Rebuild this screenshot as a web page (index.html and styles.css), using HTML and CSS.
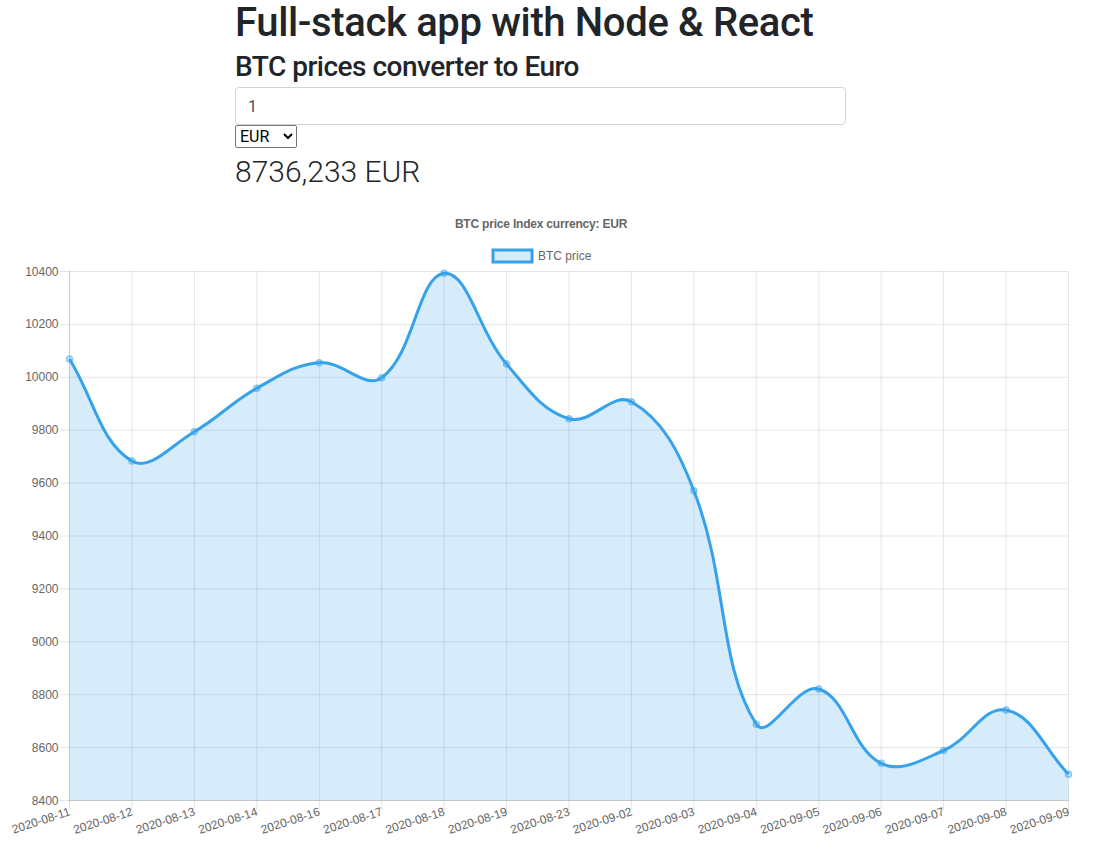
FILE: index.html
```html
<!DOCTYPE html>
<html lang="en">
<head>
<meta charset="utf-8">
<title>Full-stack app with Node &amp; React</title>
<link rel="stylesheet" href="styles.css">
</head>
<body>
<div class="app">
  <h1 class="title">Full-stack app with Node &amp; React</h1>
  <h3 class="subtitle">BTC prices converter to Euro</h3>
  <input class="amount" type="text" value="1">
  <select class="currency">
    <option>EUR</option>
    <option>USD</option>
    <option>GBP</option>
  </select>
  <p class="result">8736,233 EUR</p>
</div>
<div class="chart">
  <svg class="chart-svg" width="1111" height="660" viewBox="0 0 1111 660" xmlns="http://www.w3.org/2000/svg">
    <text class="chart-title" x="541" y="27.5" text-anchor="middle">BTC price Index currency: EUR</text>
    <rect class="legend-box" x="493" y="50" width="39" height="12"></rect>
    <text class="legend-text" x="538" y="59.5">BTC price</text>

    <g class="grid">
      <line x1="60" y1="71.5" x2="1068" y2="71.5"></line>
      <line x1="60" y1="124.4" x2="1068" y2="124.4"></line>
      <line x1="60" y1="177.3" x2="1068" y2="177.3"></line>
      <line x1="60" y1="230.2" x2="1068" y2="230.2"></line>
      <line x1="60" y1="283.1" x2="1068" y2="283.1"></line>
      <line x1="60" y1="336" x2="1068" y2="336"></line>
      <line x1="60" y1="388.9" x2="1068" y2="388.9"></line>
      <line x1="60" y1="441.8" x2="1068" y2="441.8"></line>
      <line x1="60" y1="494.7" x2="1068" y2="494.7"></line>
      <line x1="60" y1="547.6" x2="1068" y2="547.6"></line>
      <line x1="60" y1="600.5" x2="1068" y2="600.5"></line>

      <line x1="69.5" y1="71" x2="69.5" y2="610"></line>
      <line x1="131.9" y1="71" x2="131.9" y2="610"></line>
      <line x1="194.4" y1="71" x2="194.4" y2="610"></line>
      <line x1="256.8" y1="71" x2="256.8" y2="610"></line>
      <line x1="319.3" y1="71" x2="319.3" y2="610"></line>
      <line x1="381.7" y1="71" x2="381.7" y2="610"></line>
      <line x1="444.1" y1="71" x2="444.1" y2="610"></line>
      <line x1="506.6" y1="71" x2="506.6" y2="610"></line>
      <line x1="569" y1="71" x2="569" y2="610"></line>
      <line x1="631.4" y1="71" x2="631.4" y2="610"></line>
      <line x1="693.9" y1="71" x2="693.9" y2="610"></line>
      <line x1="756.3" y1="71" x2="756.3" y2="610"></line>
      <line x1="818.8" y1="71" x2="818.8" y2="610"></line>
      <line x1="881.2" y1="71" x2="881.2" y2="610"></line>
      <line x1="943.6" y1="71" x2="943.6" y2="610"></line>
      <line x1="1006.1" y1="71" x2="1006.1" y2="610"></line>
      <line x1="1068.5" y1="71" x2="1068.5" y2="610"></line>

      <line x1="69.5" y1="71" x2="69.5" y2="601"></line>
      <line x1="69" y1="600.5" x2="1069" y2="600.5"></line>
    </g>

    <g class="y-labels">
      <text x="58.5" y="75.5">10400</text>
      <text x="58.5" y="128.4">10200</text>
      <text x="58.5" y="181.3">10000</text>
      <text x="58.5" y="234.2">9800</text>
      <text x="58.5" y="287.1">9600</text>
      <text x="58.5" y="340">9400</text>
      <text x="58.5" y="392.9">9200</text>
      <text x="58.5" y="445.8">9000</text>
      <text x="58.5" y="498.7">8800</text>
      <text x="58.5" y="551.6">8600</text>
      <text x="58.5" y="604.5">8400</text>
    </g>

    <path id="area" class="area" d=""></path>
    <path id="line" class="line" d=""></path>
    <g id="points" class="points"></g>

    <g class="x-labels">
      <text transform="translate(70,612) rotate(-18)">2020-08-11</text>
      <text transform="translate(132.4,612) rotate(-18)">2020-08-12</text>
      <text transform="translate(194.9,612) rotate(-18)">2020-08-13</text>
      <text transform="translate(257.3,612) rotate(-18)">2020-08-14</text>
      <text transform="translate(319.8,612) rotate(-18)">2020-08-16</text>
      <text transform="translate(382.2,612) rotate(-18)">2020-08-17</text>
      <text transform="translate(444.6,612) rotate(-18)">2020-08-18</text>
      <text transform="translate(507.1,612) rotate(-18)">2020-08-19</text>
      <text transform="translate(569.5,612) rotate(-18)">2020-08-23</text>
      <text transform="translate(631.9,612) rotate(-18)">2020-09-02</text>
      <text transform="translate(694.4,612) rotate(-18)">2020-09-03</text>
      <text transform="translate(756.8,612) rotate(-18)">2020-09-04</text>
      <text transform="translate(819.3,612) rotate(-18)">2020-09-05</text>
      <text transform="translate(881.7,612) rotate(-18)">2020-09-06</text>
      <text transform="translate(944.1,612) rotate(-18)">2020-09-07</text>
      <text transform="translate(1006.6,612) rotate(-18)">2020-09-08</text>
      <text transform="translate(1069,612) rotate(-18)">2020-09-09</text>
    </g>
  </svg>
</div>
<script src="chart.js"></script>
</body>
</html>
```

FILE: styles.css
```css
html, body {
  margin: 0;
  padding: 0;
  background: #ffffff;
}

body {
  font-family: Roboto, "Noto Sans", "Liberation Sans", sans-serif;
  color: #212529;
}

.app {
  margin-left: 235px;
  width: 611px;
  display: flex;
  flex-direction: column;
  align-items: flex-start;
}

.title {
  margin: 0;
  font-size: 40px;
  font-weight: 500;
  line-height: 46px;
  letter-spacing: -0.35px;
}

.subtitle {
  margin: 4px 0 3px 0;
  font-size: 28px;
  font-weight: 500;
  line-height: 34px;
  letter-spacing: -0.5px;
}

.amount {
  box-sizing: border-box;
  width: 611px;
  height: 38px;
  margin: 0;
  padding: 6px 12px;
  font-family: inherit;
  font-size: 16px;
  color: #495057;
  background: #fff;
  border: 1px solid #ced4da;
  border-radius: 4px;
  outline: none;
}

.currency {
  box-sizing: border-box;
  width: 62px;
  margin: 0;
  height: 23px;
  font-family: inherit;
  font-size: 16px;
  color: #000;
  background: #fff;
  border: 1px solid #767676;
  border-radius: 2px;
}

.result {
  margin: 6px 0 0 0;
  font-size: 30px;
  font-weight: 300;
  line-height: 36px;
}

.chart {
  margin-top: 10px;
}

.chart-svg {
  display: block;
}

.chart-svg text {
  font-family: "Liberation Sans", Arial, sans-serif;
  font-size: 12px;
  fill: #666666;
}

.chart-svg .chart-title {
  font-weight: bold;
  letter-spacing: -0.2px;
}

.legend-box {
  fill: rgba(54, 162, 235, 0.2);
  stroke: #36a2eb;
  stroke-width: 3;
}

.grid line {
  stroke: rgba(0, 0, 0, 0.1);
  stroke-width: 1;
}

.y-labels text {
  text-anchor: end;
}

.x-labels text {
  text-anchor: end;
  dominant-baseline: middle;
}

.area {
  fill: rgba(54, 162, 235, 0.2);
  stroke: none;
}

.line {
  fill: none;
  stroke: #36a2eb;
  stroke-width: 3;
  stroke-linejoin: round;
}

.points circle {
  fill: rgba(54, 162, 235, 0.25);
  stroke: rgba(54, 162, 235, 0.55);
  stroke-width: 1.5;
}
```

FILE: chart.js
```js
(function () {
  var raw = [359, 461, 431.7, 388.3, 362.7, 377.7, 273.3, 364, 418.7, 401.7, 490.7, 724.3, 689, 763.3, 750.5, 710, 774.3];
  var top = 71, bottom = 600.5;
  var x0 = 69.5, x1 = 1068.5;
  var n = raw.length;
  var dx = (x1 - x0) / (n - 1);
  var t = 0.4;
  var pts = raw.map(function (v, i) { return { x: x0 + i * dx, y: v - 200 }; });

  pts.forEach(function (cur, i) {
    var prev = pts[i - 1] || cur;
    var next = pts[i + 1] || cur;
    var d01 = Math.sqrt(Math.pow(cur.x - prev.x, 2) + Math.pow(cur.y - prev.y, 2));
    var d12 = Math.sqrt(Math.pow(next.x - cur.x, 2) + Math.pow(next.y - cur.y, 2));
    var s01 = d01 / (d01 + d12);
    var s12 = d12 / (d01 + d12);
    if (!isFinite(s01)) { s01 = 0; }
    if (!isFinite(s12)) { s12 = 0; }
    var fa = t * s01, fb = t * s12;
    cur.c1x = cur.x - fa * (next.x - prev.x);
    cur.c1y = cur.y - fa * (next.y - prev.y);
    cur.c2x = cur.x + fb * (next.x - prev.x);
    cur.c2y = cur.y + fb * (next.y - prev.y);
    cur.c1y = Math.min(Math.max(cur.c1y, top), bottom);
    cur.c2y = Math.min(Math.max(cur.c2y, top), bottom);
  });

  function f(v) { return v.toFixed(2); }

  var d = 'M' + f(pts[0].x) + ' ' + f(pts[0].y);
  for (var i = 1; i < n; i++) {
    var a = pts[i - 1], b = pts[i];
    d += ' C' + f(a.c2x) + ' ' + f(a.c2y) + ' ' + f(b.c1x) + ' ' + f(b.c1y) + ' ' + f(b.x) + ' ' + f(b.y);
  }
  document.getElementById('line').setAttribute('d', d);
  document.getElementById('area').setAttribute('d', d + ' L' + f(x1) + ' ' + bottom + ' L' + f(x0) + ' ' + bottom + ' Z');

  var g = document.getElementById('points');
  var ns = 'http://www.w3.org/2000/svg';
  pts.forEach(function (p) {
    var c = document.createElementNS(ns, 'circle');
    c.setAttribute('cx', f(p.x));
    c.setAttribute('cy', f(p.y));
    c.setAttribute('r', '3');
    g.appendChild(c);
  });
})();
```
